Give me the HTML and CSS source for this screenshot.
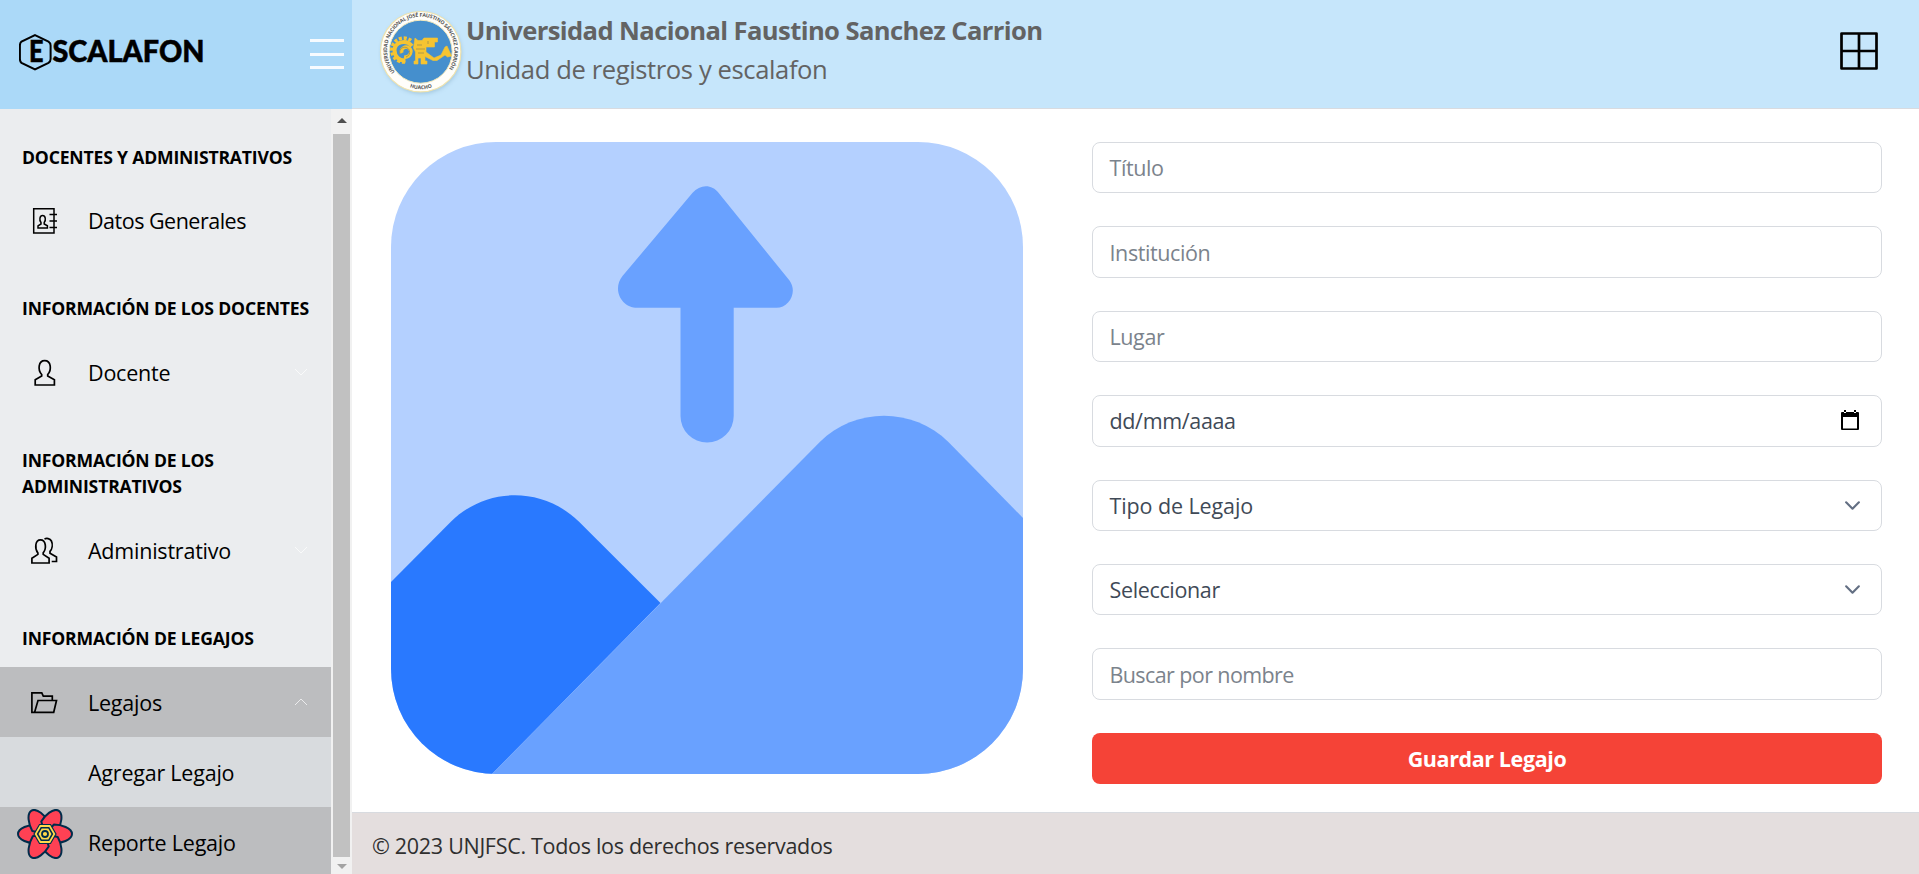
FILE: index.html
```html
<!DOCTYPE html>
<html lang="es">
<head>
<meta charset="utf-8">
<title>Escalafon</title>
<link rel="stylesheet" href="styles.css">
</head>
<body>
<div class="app">
  <aside class="sidebar">
    <div class="brand">
      <svg class="brand-logo" width="190" height="40" viewBox="0 0 190 40">
        <path d="M16 3.200 L29.500 9.600 Q31.600 11 31.600 13.500 V27 Q31.600 29.500 29.500 30.900 L16 37.500 L2.500 30.900 Q0.900 29.500 0.900 27 V13.500 Q0.900 11 2.500 9.600 Z" fill="none" stroke="#000" stroke-width="2"/>
        <text class="brand-text" x="10" y="30" textLength="14.500" lengthAdjust="spacingAndGlyphs">E</text>
        <text class="brand-text" x="33.500" y="30" textLength="152" lengthAdjust="spacingAndGlyphs">SCALAFON</text>
      </svg>
      <div class="toggler"><i></i><i></i><i></i></div>
    </div>
    <div class="side-body">
      <nav class="nav">
        <div class="nav-title first"><span>DOCENTES Y ADMINISTRATIVOS</span></div>
        <a class="nav-link">
          <svg class="nav-icon" viewBox="0 0 28 28"><path d="M2.700 1.700H23v24.300H2.700zM18.500 7.500h7.500M18.500 14h7.500M18.500 20.500h7.500" stroke-width="1.500"/><path d="M7 21v-2.200l3-1.800v-1.500c-2-2.500-1.300-7 1.600-7s3.600 4.500 1.600 7V17l3.200 1.800V21z" stroke-width="1.500"/></svg>
          <span class="tight">Datos Generales</span>
        </a>
        <div class="nav-title"><span>INFORMACIÓN DE LOS DOCENTES</span></div>
        <a class="nav-link">
          <svg class="nav-icon" viewBox="0 0 28 28"><path d="M4.200 26v-5.200l6.500-3.700v-1.600C6.500 11 7.300 1.700 13.700 1.700s7.200 9.300 3 13.800v1.600l6.700 3.700V26z"/></svg>
          <span>Docente</span>
          <svg class="caret" viewBox="0 0 16 16"><path d="M2 5l6 6 6-6"/></svg>
        </a>
        <div class="nav-title"><span>INFORMACIÓN DE LOS ADMINISTRATIVOS</span></div>
        <a class="nav-link">
          <svg class="nav-icon" viewBox="0 0 28 28"><path d="M.9 26v-4.800l6-3.800v-1.500C3.500 11.500 4 2.900 9.500 2.900s6.300 8.600 2.700 13v1.500l5.900 3.800V26zM13.500 2c2-1 5.500-.8 6.900 2 1.700 3.500.7 7.900-1.400 10.400v1.900l6.500 3.800v4.400h-4.800"/></svg>
          <span>Administrativo</span>
          <svg class="caret" viewBox="0 0 16 16"><path d="M2 5l6 6 6-6"/></svg>
        </a>
        <div class="nav-title"><span>INFORMACIÓN DE LEGAJOS</span></div>
        <a class="nav-link open">
          <svg class="nav-icon" viewBox="0 0 28 28"><path d="M3.600 23.300H.9V3.900h9.900l1.500 3.200h9v4.300M3.600 23.300l3.400-11.800h18.500l-2.800 11.800z"/></svg>
          <span>Legajos</span>
          <svg class="caret" viewBox="0 0 16 16"><path d="M2 11l6-6 6 6"/></svg>
        </a>
        <a class="nav-link sub"><span>Agregar Legajo</span></a>
        <a class="nav-link sub open"><span>Reporte Legajo</span></a>
      </nav>
      <div class="scrollbar"><b class="up"></b><div class="thumb"></div><b class="down"></b></div>
    </div>
  </aside>

  <div class="wrapper">
    <header class="header">
      <svg class="seal" width="88" height="90" viewBox="0 0 88 90">
        <defs>
          <path id="ring" d="M17 62A33.600 33.600 0 1 1 68.400 62"/>
          <path id="ringLow" d="M28 75.500Q43 83 58 75.500"/>
        </defs>
        <circle class="seal-shadow" cx="43.500" cy="43.500" r="40"/>
        <circle cx="42.700" cy="41.700" r="40.200" fill="#fffefa" stroke="#f0e3ad" stroke-width="1.200"/>
        <circle cx="42.700" cy="41.700" r="31.500" fill="#458fcd" stroke="#f3e9bd" stroke-width="1"/>
        <text class="seal-text"><textPath href="#ring" textLength="148">UNIVERSIDAD NACIONAL JOSÉ FAUSTINO SÁNCHEZ CARRIÓN</textPath></text>
        <text class="seal-text"><textPath href="#ringLow" startOffset="50%" text-anchor="middle">HUACHO</textPath></text>
        <g class="seal-glow" fill="none" stroke="#f6c431">
          <path d="M33 30.500A12 12 0 1 0 27 52" stroke-width="3.500" stroke-dasharray="3 1.800"/>
          <path d="M34 36C28 29 17 32 16.500 40c0 7 5 11 11 10.500" stroke-width="4"/>
          <path d="M26 47c6 1 9-6 5-9-4-2.500-9 1-7 5" stroke-width="3.500"/>
          <path d="M37 28l3 2.500h4l2-2.500h13.500v4h-3v5H48v5l8 6 7-3 4-8 2-1 4.500 10-4 1-2.500-2-8 5.500h-4L47 46.500V51h2v3h-6v-6h-3v6h-4v-3h1.500v-9l-2-4z" fill="#f6c431" stroke-width=".6"/>
        </g>
        <path d="M39 35h5M38 39h9M40 43h6M50 31v3M22 44a5 5 0 1 1 6 3" fill="none" stroke="#a8964a" stroke-width=".9"/>
      </svg>
      <div class="heading">
        <div class="uni">Universidad Nacional Faustino Sanchez Carrion</div>
        <div class="unit">Unidad de registros y escalafon</div>
      </div>
      <svg class="grid-icon" width="38" height="38" viewBox="0 0 38 38"><path d="M1.500 1.500h35v35h-35zM19 1.500v35M1.500 19h35" fill="none" stroke="#000" stroke-width="2.700" stroke-linejoin="round"/></svg>
    </header>

    <main class="content">
      <svg class="upload" width="632" height="632" viewBox="0 0 632 632">
        <defs><clipPath id="card"><rect width="632" height="632" rx="105"/></clipPath></defs>
        <g clip-path="url(#card)">
          <rect width="632" height="632" fill="#b4d0ff"/>
          <path d="M0 440L59.600 380C95 344.500 152 344.500 187.800 379.500L269.500 461 101 632H0z" fill="#2979ff"/>
          <path d="M101 632L428.800 300C464 265 522 265 557.400 300L632 376V632z" fill="#69a1ff"/>
          <path d="M301.600 50.800C309 42 321 42 327.500 50.800L398.500 138.500C407 150 398 165.800 385.500 165.800H342.700V274a26.600 26.600 0 0 1-53.200 0V165.800H246.700C230 165.800 221 147 231.500 134z" fill="#69a1ff"/>
        </g>
      </svg>
      <form class="form">
        <div class="field hint"><span>Título</span></div>
        <div class="field hint"><span>Institución</span></div>
        <div class="field hint"><span>Lugar</span></div>
        <div class="field"><span>dd/mm/aaaa</span>
          <svg class="cal" width="20" height="22" viewBox="0 0 20 22"><path d="M2 2h16a1 1 0 0 1 1 1v16a1 1 0 0 1-1 1H2a1 1 0 0 1-1-1V3a1 1 0 0 1 1-1zm1 5v11.500h14V7zM4 0h2v3H4zM14 0h2v3h-2z" fill="#000" fill-rule="evenodd"/></svg>
        </div>
        <div class="field"><span class="wide">Tipo de Legajo</span><svg class="chev" width="17" height="17" viewBox="0 0 16 16"><path d="M2 5l6 6 6-6"/></svg></div>
        <div class="field"><span>Seleccionar</span><svg class="chev" width="17" height="17" viewBox="0 0 16 16"><path d="M2 5l6 6 6-6"/></svg></div>
        <div class="field hint search"><span>Buscar por nombre</span></div>
        <button class="save" type="button">Guardar Legajo</button>
      </form>
    </main>

    <footer class="footer">© 2023 UNJFSC. Todos los derechos reservados</footer>
  </div>

  <svg class="flower" width="56" height="50" viewBox="0 0 56 50">
    <g fill="#ff4154" stroke="#002c4b" stroke-width="2" stroke-linejoin="round">
      <path id="petal" d="M28 25L20 15.500C12 15.500 1 19 1 25s11 9.500 18 9.500z"/>
      <use href="#petal" transform="rotate(60 28 25)"/>
      <use href="#petal" transform="rotate(120 28 25)"/>
      <use href="#petal" transform="rotate(180 28 25)"/>
      <use href="#petal" transform="rotate(240 28 25)"/>
      <use href="#petal" transform="rotate(300 28 25)"/>
    </g>
    <path d="M22.500 15.500h11l5.500 9.500-5.500 9.500h-11L17 25z" fill="#ffd94c" stroke="#002c4b" stroke-width="1.200"/>
    <path d="M24.200 18.800h7.600l3.600 6.200-3.600 6.200h-7.600L20.600 25z" fill="none" stroke="#002c4b" stroke-width="1.500"/>
    <circle cx="28" cy="25" r="3" fill="none" stroke="#002c4b" stroke-width="1.800"/>
  </svg>
</div>
</body>
</html>
```
FILE: styles.css
```css
* { box-sizing: border-box; }
body {
  margin: 0;
  font-family: "Open Sans", "Noto Sans", sans-serif;
  font-size: 21.500px;
  line-height: 33px;
  color: #2c384a;
}
.app { display: flex; width: 1919px; height: 874px; overflow: hidden; position: relative; background: #fff; }

.sidebar { width: 352px; display: flex; flex-direction: column; background: #ebedef; }
.brand { height: 109px; flex: none; background: #abd9f8; display: flex; align-items: flex-start; justify-content: space-between; padding: 32px 8px 0 19px; }
.brand-text { font-family: Lato, sans-serif; font-weight: 900; font-size: 29.500px; fill: #000; stroke: #000; stroke-width: .5px; }
.toggler { display: flex; flex-direction: column; gap: 10.500px; margin-top: 7px; width: 34px; }
.toggler i { height: 3px; background: #f7fbff; }

.side-body { flex: 1; min-height: 0; display: flex; }
.nav { width: 331px; overflow: hidden; color: #000; }
.nav-title { margin-top: 22px; padding: 17.200px 22px 15.800px; font-size: 17.600px; line-height: 26.400px; font-weight: 700; letter-spacing: -0.180px; }
.nav-title.first { margin-top: 17.400px; }
.nav-link { display: flex; align-items: center; height: 70.200px; padding: 0 22px; letter-spacing: -0.220px; }
.nav-link .tight { letter-spacing: -0.500px; }
.nav-icon { flex: none; width: 28px; height: 28px; margin: 1px 29px 0 9px; fill: none; stroke: #000; stroke-width: 1.700; }
.nav-link.open { background: #bcbdbf; }
.nav-link.sub { padding-left: 88px; }
.nav-link.sub:not(.open) { background: #d8dbde; }
.caret { width: 16px; height: 16px; margin-left: auto; fill: none; stroke: #fff; stroke-opacity: .7; stroke-width: 1; }
.scrollbar { width: 21px; background: #f1f1f1; display: flex; flex-direction: column; align-items: center; padding: 9px 0 5px 0; }
.up, .down { width: 0; height: 0; border: 5px solid transparent; }
.up { border-top: 0; border-bottom-color: #505050; margin-bottom: 11px; }
.down { border-bottom: 0; border-top-color: #a3a3a3; margin-top: 7px; }
.thumb { flex: 1; width: 17px; background: #c1c1c1; }

.wrapper { flex: 1; display: flex; flex-direction: column; min-width: 0; }
.header { height: 109px; flex: none; background: #c6e6fb; border-bottom: 1px solid #d8dbe0; display: flex; align-items: flex-start; padding: 10px 41px 0 26px; color: #636363; }
.seal { flex: none; }
.seal-text { font-family: "Open Sans", sans-serif; font-size: 5.200px; font-weight: 700; fill: #555; }
.seal-shadow { fill: #7aa3bd; opacity: .5; filter: blur(2px); }
.seal-glow { filter: blur(.5px); }
.heading { flex: 1; white-space: nowrap; padding-top: 1px; }
.uni { font-size: 25.600px; line-height: 39px; font-weight: 700; letter-spacing: -0.600px; }
.unit { font-size: 25.600px; line-height: 39px; letter-spacing: -0.400px; }
.grid-icon { margin-top: 21.500px; }

.content { flex: 1; display: grid; grid-template-columns: 632px 790px; column-gap: 69px; padding: 33px 37px 0 39px; align-items: start; }
.upload { display: block; }
.form { display: flex; flex-direction: column; gap: 33px; }
.field { height: 51.400px; border: 1px solid #d8dbe0; border-radius: 8px; padding: 0 16px 0 16.500px; display: flex; align-items: center; justify-content: space-between; color: #3f4a57; letter-spacing: -0.350px; }
.field .wide { letter-spacing: -0.100px; }
.field.hint { color: #7b838c; letter-spacing: -0.400px; }
.field.search { letter-spacing: -0.600px; }
.chev { margin-right: 4px; fill: none; stroke: #636f83; stroke-width: 2; stroke-linecap: round; stroke-linejoin: round; }
.cal { margin-right: 5px; }
.save { height: 51.600px; border: 0; border-radius: 8px; background: #f54337; color: #fff; font: 700 21.500px "Open Sans", sans-serif; letter-spacing: -0.400px; }
.footer { height: 62px; flex: none; background: #e4dede; border-top: 1px solid #d8dbe0; padding: 16px 20px 0; color: #2f2f2f; letter-spacing: -0.300px; }
.flower { position: absolute; left: 16.500px; top: 809px; }
```
